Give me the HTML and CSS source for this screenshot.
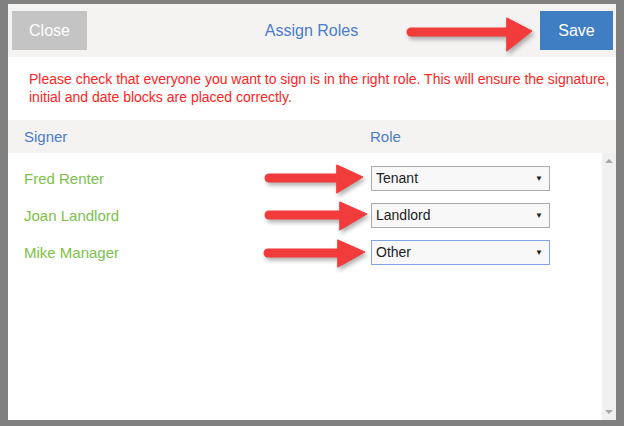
FILE: index.html
```html
<!DOCTYPE html>
<html>
<head>
    <title>Assign Roles</title>
    <link rel="stylesheet" href="styles.css">
</head>
<body>
    <div class="modal">
        <div class="modal-header">
            <button class="btn btn-close">Close</button>
            <h2 class="title">Assign Roles</h2>
            <button class="btn btn-save">Save</button>
        </div>
        <div class="notice">
            Please check that everyone you want to sign is in the right role. This will ensure the signature,<br>
            initial and date blocks are placed correctly.
        </div>
        <div class="table-head">
            <span class="col-name">Signer</span>
            <span class="col-role">Role</span>
        </div>
        <div class="table-body">
            <div class="rows">
                <div class="row">
                    <span class="col-name signer">Fred Renter</span>
                    <span class="col-role"><span class="select">Tenant</span></span>
                </div>
                <div class="row">
                    <span class="col-name signer">Joan Landlord</span>
                    <span class="col-role"><span class="select">Landlord</span></span>
                </div>
                <div class="row">
                    <span class="col-name signer">Mike Manager</span>
                    <span class="col-role"><span class="select focused">Other</span></span>
                </div>
            </div>
            <div class="scrollbar">
                <span class="scroll-up"></span>
                <span class="scroll-down"></span>
            </div>
        </div>
    </div>

    <!-- annotation arrows drawn over the screenshot -->
    <svg class="arrows" width="624" height="426" viewBox="0 0 624 426">
        <g fill="#f23b3b" stroke="#f23b3b" stroke-linecap="round">
            <line x1="411" y1="32" x2="510" y2="32" stroke-width="9"/>
            <polygon points="507,18 532,31 507,51" stroke-width="1" stroke-linejoin="round"/>

            <line x1="269" y1="178" x2="340" y2="178" stroke-width="9"/>
            <polygon points="337,165 363,177 337,193" stroke-width="1" stroke-linejoin="round"/>

            <line x1="269" y1="215" x2="343" y2="215" stroke-width="9"/>
            <polygon points="340,202 367,214 340,230" stroke-width="1" stroke-linejoin="round"/>

            <line x1="268" y1="253" x2="341" y2="253" stroke-width="9"/>
            <polygon points="338,240 365,252 338,267" stroke-width="1" stroke-linejoin="round"/>
        </g>
    </svg>
</body>
</html>
```

FILE: styles.css
```css
body {
    margin: 0;
    width: 624px;
    height: 426px;
    background: #808080;
    font-family: "Liberation Sans", Arial, sans-serif;
    position: relative;
    overflow: hidden;
}
.modal {
    margin: 4px 0 0 8px;
    width: 608px;
    height: 416px;
    background: #fff;
    display: flex;
    flex-direction: column;
}
.modal-header {
    height: 53px;
    box-sizing: border-box;
    background: #f4f3f1;
    display: flex;
    align-items: center;
    justify-content: space-between;
    padding: 0 3px 0 4px;
}
.btn {
    border: none;
    height: 39px;
    color: #fff;
    font-family: inherit;
    font-size: 16px;
    padding: 0;
}
.btn-close {
    width: 75px;
    background: #c4c4c4;
}
.btn-save {
    width: 73px;
    background: #3f7ec2;
}
.title {
    margin: 0;
    font-size: 16px;
    font-weight: normal;
    color: #4a7ccb;
    padding-right: 4px;
}
.notice {
    height: 63px;
    box-sizing: border-box;
    padding: 13px 0 0 21px;
    font-size: 14px;
    line-height: 18px;
    color: #ff2424;
    white-space: nowrap;
    overflow: hidden;
}
.table-head {
    height: 33px;
    background: #f4f3f1;
    display: flex;
    align-items: center;
    font-size: 15px;
    color: #4a7ccb;
}
.col-name {
    width: 347px;
    padding-left: 16px;
}
.table-head .col-role {
    margin-left: -1px;
}
.table-body {
    flex: 1;
    display: flex;
}
.rows {
    flex: 1;
    padding-top: 7px;
}
.row {
    height: 37px;
    display: flex;
    align-items: center;
    font-size: 15px;
}
.signer {
    color: #7cbf4a;
}
.select {
    display: block;
    position: relative;
    width: 179px;
    height: 25px;
    box-sizing: border-box;
    border: 1px solid #ababab;
    background: #f8f8f8;
    color: #222;
    font-size: 14px;
    line-height: 23px;
    padding-left: 4px;
}
.select::after {
    content: "\25BC";
    position: absolute;
    right: 6px;
    top: 0;
    font-size: 8px;
    color: #222;
}
.select.focused {
    border-color: #7fa6e2;
}
.scrollbar {
    width: 14px;
    background: #f0f0f0;
    display: flex;
    flex-direction: column;
    justify-content: space-between;
    align-items: center;
    padding: 6px 0 6px;
}
.scroll-up, .scroll-down {
    width: 0;
    height: 0;
    border-left: 4px solid transparent;
    border-right: 4px solid transparent;
}
.scroll-up {
    border-bottom: 4px solid #a8a8a8;
}
.scroll-down {
    border-top: 4px solid #a8a8a8;
}
.arrows {
    position: absolute;
    left: 0;
    top: 0;
    pointer-events: none;
    filter: drop-shadow(2px 3px 2px rgba(0, 0, 0, 0.3));
}
```
